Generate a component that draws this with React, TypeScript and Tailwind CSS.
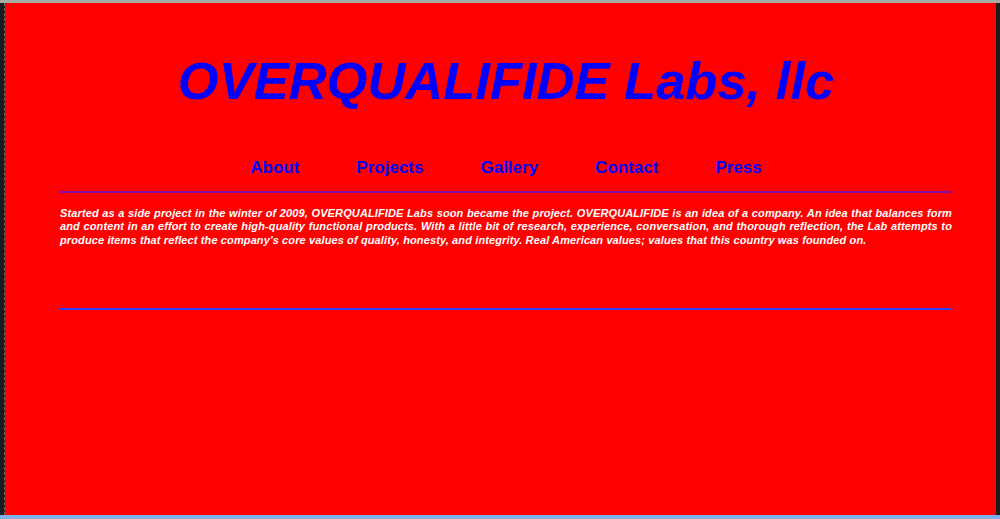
export default function App() {
  const links = ["About", "Projects", "Gallery", "Contact", "Press"];
  return (
    <div className="flex h-[519px] w-[1000px] flex-col overflow-hidden bg-[#222]" style={{ fontFamily: '"Liberation Sans", Arial, sans-serif' }}>
      <div className="h-[3px] w-full bg-[#a4aca4]" />
      <div className="flex flex-1">
        <div className="w-[5px] border-r border-dashed border-[#666] bg-[#1c1c1c]" />
        <main className="flex-1 bg-[#ff0000] pl-[55px] pr-[44px]">
          <h1 className="mt-[52px] text-center text-[52.5px] font-bold italic leading-none text-[#0000ff]">
            OVERQUALIFIDE Labs, llc
          </h1>
          <nav className="mt-[51px] flex justify-center gap-[57px]">
            {links.map((l) => (
              <a key={l} href="#" className="text-[17px] font-bold leading-[18px] text-[#0000ff]">
                {l}
              </a>
            ))}
          </nav>
          <hr className="mt-[14px] h-[2px] border-0 bg-[#7a10a8]" />
          <p className="mt-[14px] text-justify text-[11px] font-bold italic leading-[13.5px] tracking-[0.12px] text-white">
            Started as a side project in the winter of 2009, OVERQUALIFIDE Labs soon became the project. OVERQUALIFIDE is an idea of a company. An idea that balances form and content in an effort to create high-quality functional products. With a little bit of research, experience, conversation, and thorough reflection, the Lab attempts to produce items that reflect the company's core values of quality, honesty, and integrity. Real American values; values that this country was founded on.
          </p>
          <hr className="mt-[61px] h-[2px] border-0 bg-[#3040ff]" />
        </main>
        <div className="w-[4px] bg-[#1c1c1c]" />
      </div>
      <div className="h-[4px] w-full bg-[#7fb0ec]" />
    </div>
  );
}
